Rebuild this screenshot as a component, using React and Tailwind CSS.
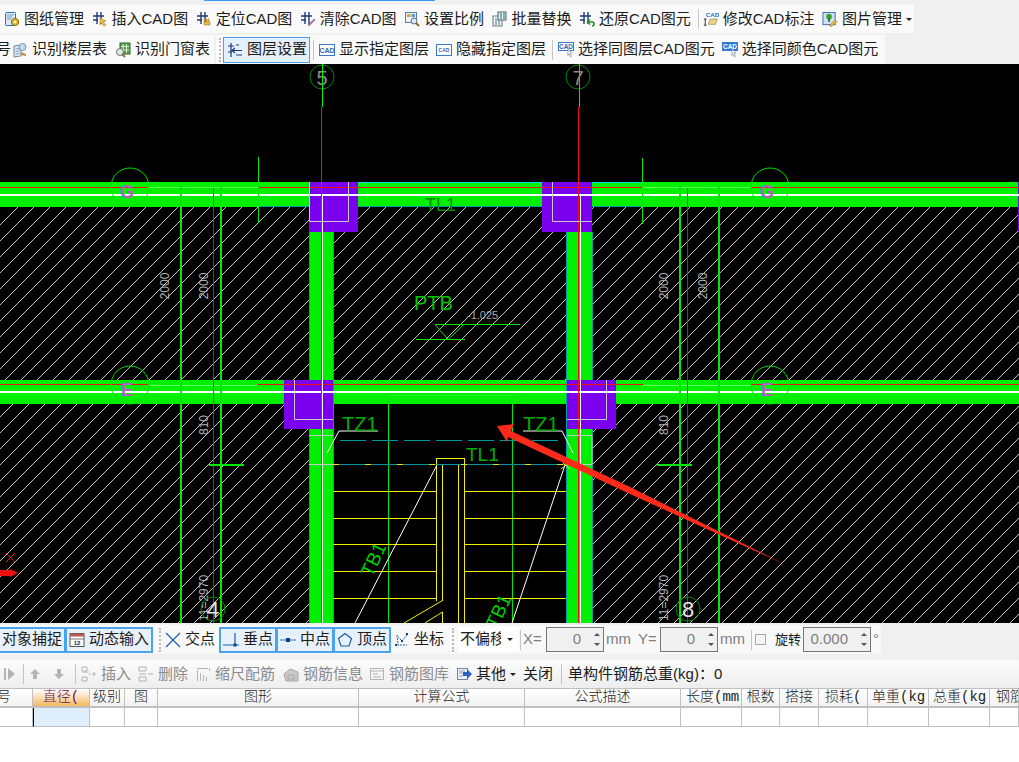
import React from 'react';

const NAVY = '#1d3a7a';

// 工具栏小图标
function Axis({ accent }) {
    return (
        <svg width="16" height="16" viewBox="0 0 16 16">
            <path d="M5 1v12M9 1v12M1 5h11M1 9h5" stroke={NAVY} strokeWidth="1.4" fill="none" />
            {accent === 'bolt' && <path d="M8 7l6 3-3 1 3 3-2 1-3-3-1 2z" fill="#e8c04a" stroke="#8a6a10" strokeWidth="0.5" />}
            {accent === 'hand' && <path d="M8 14V8h1v3h1V8h1v3h1V8h1v3h1v3z" fill="#e8b850" stroke="#9a7420" strokeWidth="0.5" />}
            {accent === 'eraser' && <path d="M8 14l6-6 1 1-6 6z" fill="#c878c8" stroke="#804080" strokeWidth="0.5" />}
            {accent === 'back' && <path d="M8 11h5a2 2 0 0 1 0 4M8 11l3-2.500M8 11l3 2.500" stroke="#2a8a30" strokeWidth="1.600" fill="none" />}
        </svg>
    );
}

function DocGear() {
    return (
        <svg width="16" height="16" viewBox="0 0 16 16">
            <rect x="1.500" y="1.500" width="10" height="13" rx="1" fill="#dcebf8" stroke="#2a70b0" />
            <path d="M3 4h7M3 6h5M3 8h4" stroke="#6a9cc8" />
            <circle cx="11" cy="11" r="3.600" fill="#e8b820" stroke="#8a6a10" />
            <circle cx="11" cy="11" r="1.200" fill="#fff" />
        </svg>
    );
}

function Scale() {
    return (
        <svg width="16" height="16" viewBox="0 0 16 16">
            <rect x="1.500" y="1.500" width="11" height="10" fill="#eef3fa" stroke="#5a7ea8" />
            <rect x="3" y="3" width="3.500" height="3" fill="#e0a040" />
            <rect x="7.500" y="3" width="3.500" height="3" fill="#5a9ad8" />
            <circle cx="10" cy="10" r="3" fill="#d8e8f4" stroke="#607080" />
            <path d="M12 12l3 3" stroke="#806030" strokeWidth="1.800" />
        </svg>
    );
}

function Batch() {
    return (
        <svg width="16" height="16" viewBox="0 0 16 16">
            <rect x="1" y="5" width="9" height="10" fill="#f4f6f6" stroke="#607880" />
            <path d="M4 7v7M7 7v7" stroke="#507888" />
            <rect x="6" y="1" width="8" height="8" fill="#e4eeee" stroke="#406870" />
            <path d="M9 2v6M12 2v6" stroke="#2a6a78" />
        </svg>
    );
}

function EditCad() {
    return (
        <svg width="18" height="18" viewBox="0 0 18 18">
            <text x="3" y="6.500" fontSize="7" fontWeight="700" fill="#2a70c8" fontFamily="Liberation Sans">CAD</text>
            <path d="M1 9h3M2.500 9v7M1 16h3" stroke="#222" fill="none" />
            <path d="M6 15l2-6h8l-2 6z" fill="#e8d48a" stroke="#9a7a30" strokeWidth="0.7" />
        </svg>
    );
}

function Picture() {
    return (
        <svg width="17" height="17" viewBox="0 0 17 17">
            <rect x="1" y="1" width="13" height="13" fill="#cfe0f6" stroke="#3a68b8" />
            <circle cx="7.500" cy="5.500" r="3" fill="#3aa030" />
            <rect x="6.500" y="7" width="2" height="4" fill="#2a7a28" />
            <path d="M8 15l6-6 2 2-6 5z" fill="#e8c040" stroke="#906a10" strokeWidth="0.6" />
        </svg>
    );
}

function FloorTable() {
    return (
        <svg width="16" height="16" viewBox="0 0 16 16">
            <path d="M2 4l7-1v11l-7 1z" fill="#dfe8f4" stroke="#7088a8" />
            <path d="M3.500 7l4-.5M3.500 9.500l4-.5M3.500 12l4-.5" stroke="#8aa0c0" />
            <circle cx="10.500" cy="5" r="3.500" fill="#c8dcf0" stroke="#7090b0" />
            <path d="M9 10l5 2v2l-5-1z" fill="#d08a30" />
        </svg>
    );
}

function DoorTable() {
    return (
        <svg width="16" height="16" viewBox="0 0 16 16">
            <rect x="5" y="1" width="10" height="11" fill="#5aa050" stroke="#2a6a28" />
            <path d="M8 2v9M11.500 2v9M6 4.500h8M6 8h8" stroke="#d8ecd0" />
            <circle cx="5" cy="10" r="3.500" fill="#dce8e0" stroke="#707870" />
            <path d="M7 12l3 3" stroke="#906a30" strokeWidth="1.800" />
        </svg>
    );
}

function LayerSet() {
    return (
        <svg width="16" height="16" viewBox="0 0 16 16">
            <path d="M4 1v14M1 4h6M1 10h4M8 6l-3 2.500 3 2.500M5 8.500h10M9 13h6M9 3h3" stroke={NAVY} strokeWidth="1.200" fill="none" />
        </svg>
    );
}

function CadBox({ small }) {
    return (
        <svg width="16" height="16" viewBox="0 0 16 16">
            <rect x="0.500" y="2.500" width="15" height="11" fill="#fff" stroke="#3a78c8" />
            <text x="8" y={small ? 10 : 11} textAnchor="middle" fontSize={small ? 5 : 7} fontWeight="700" fill="#2a68b8" fontFamily="Liberation Sans">CAD</text>
        </svg>
    );
}

function CadCursor({ solid }) {
    return (
        <svg width="16" height="16" viewBox="0 0 16 16">
            <rect x="0.500" y="0.500" width="15" height="8" fill={solid ? '#2a78d8' : '#fff'} stroke="#3a78c8" />
            <text x="8" y="7" textAnchor="middle" fontSize="6.500" fontWeight="700" fill={solid ? '#fff' : '#2a68b8'} fontFamily="Liberation Sans">CAD</text>
            <path d="M10 7l4 4-2 .3 1.500 3-1.200.7-1.500-3-1 1.500z" fill="#e8eef4" stroke="#7a8aa0" strokeWidth="0.6" />
        </svg>
    );
}

function Calc() {
    return (
        <svg width="16" height="16" viewBox="0 0 16 16">
            <rect x="1" y="1.500" width="14" height="13" fill="#fff" stroke="#555" />
            <rect x="1" y="1.500" width="14" height="3" fill="#b85a50" />
            <path d="M1 7h14" stroke="#777" />
            <text x="8" y="13" textAnchor="middle" fontSize="6" fontWeight="700" fill="#222" fontFamily="Liberation Sans">12</text>
        </svg>
    );
}

function Snap({ type }) {
    const blue = '#1c5fa8';
    return (
        <svg width="16" height="16" viewBox="0 0 16 16">
            {type === 'cross' && <path d="M1 1l14 14M15 1L1 15" stroke={blue} strokeWidth="1.200" />}
            {type === 'perp' && <>
                <path d="M0 13h16M12 1v12" stroke={blue} strokeWidth="1.200" />
                <rect x="10.500" y="11.500" width="3" height="3" fill="#123f80" />
            </>}
            {type === 'mid' && <>
                <path d="M0 8h16" stroke="#4a8ad0" strokeWidth="1.200" />
                <rect x="6" y="6" width="4" height="4" fill="#123f80" />
            </>}
            {type === 'vertex' && <path d="M8 1.500l6.500 5-2.500 7.500H4L1.500 6.500z" fill="none" stroke={blue} strokeWidth="1.200" />}
            {type === 'coord' && <>
                <path d="M3 3l1 10h9M13 3L8 9 4 5" stroke={blue} fill="none" strokeDasharray="2 1" />
                <rect x="1" y="12" width="2" height="2" fill="#123f80" />
                <rect x="12" y="1" width="2" height="2" fill="#123f80" />
                <rect x="7" y="8" width="2" height="2" fill="#123f80" />
            </>}
        </svg>
    );
}

function Gray({ type }) {
    const c = '#b4b4b4';
    return (
        <svg width="16" height="16" viewBox="0 0 16 16">
            {type === 'last' && <path d="M2 2v12h2V2zM6 2v12l7-6z" fill={c} />}
            {type === 'up' && <path d="M8 3l5 5H10v5H6V8H3z" fill={c} />}
            {type === 'down' && <path d="M8 13l5-5H10V3H6v5H3z" fill={c} />}
            {type === 'ins' && <path d="M1 1h5v4H1zM1 11h5v4H1zM1 6h7M11 8h4M13 6v4M8 8h2" stroke={c} fill="none" />}
            {type === 'del' && <path d="M1 1h7v4H1zM1 11h7v4H1zM1 8h7M10 8h5" stroke={c} fill="none" />}
            {type === 'scale' && <path d="M2 15V4h1v11zM5 15V7h1v8zM8 15V9h1v6zM11 15v-4h1v4zM2 2h11v1H2zM14 2h1v3h-1z" fill={c} />}
            {type === 'info' && <path d="M1 8l6-5 8 3v9H3z M5 9h6v4H5z" fill="#c8c8c8" stroke="#a8a8a8" />}
            {type === 'lib' && <path d="M1.500 2.500h13v11h-13zM1.500 5h13M4 8h5M4 11h8" stroke={c} fill="none" />}
        </svg>
    );
}

function Other() {
    return (
        <svg width="16" height="16" viewBox="0 0 16 16">
            <rect x="1.500" y="2.500" width="10" height="11" fill="#eef2f8" stroke="#7088a8" />
            <path d="M3 5h6M3 7h4M3 10h4" stroke="#90a0b8" />
            <path d="M7 6h4V3l5 5-5 5v-3H7z" fill="#2a62c8" />
        </svg>
    );
}

function Tool({ icon, label, className = '' }) {
    return (
        <div className={`flex items-center gap-[4px] shrink-0 ${className}`}>
            <span className="w-[16px] h-[16px] flex items-center justify-center shrink-0">{icon}</span>
            <span className="whitespace-nowrap">{label}</span>
        </div>
    );
}

function Caret() {
    return <span className="block w-0 h-0 border-x-[3px] border-x-transparent border-t-[3px] border-t-[#222] shrink-0" />;
}

function Grip() {
    return <span className="block w-[2px] h-[24px] shrink-0 border-l-2 border-dotted border-[#b8b8b8]" />;
}

function Sep() {
    return <span className="block w-px h-[20px] bg-[#c4c4c4] shrink-0" />;
}

function Spin({ value, className }) {
    return (
        <div className={`h-[25px] border border-[#767676] bg-[#f0f0f0] flex items-center justify-end shrink-0 ${className}`}>
            <span className="text-[#7f7f7f]">{value}</span>
            <div className="w-[18px] pl-[5px] flex flex-col gap-[7px] items-center ml-[4px]">
                <span className="block w-0 h-0 border-x-[3px] border-x-transparent border-b-[3px] border-b-[#555]" />
                <span className="block w-0 h-0 border-x-[3px] border-x-transparent border-t-[3px] border-t-[#555]" />
            </div>
        </div>
    );
}

function SnapBtn({ icon, label, className = '' }) {
    return (
        <div className={`h-[26px] flex items-center justify-center gap-[4px] border-2 border-[#4aa3ee] bg-[#e6f1fb] shrink-0 ${className}`}>
            {icon}
            <span>{label}</span>
        </div>
    );
}

// 底图：CAD 绘图区，坐标直接用截图坐标
function CadCanvas() {
    const hatch = [];
    for (let c = 224; c < 1700; c += 16) {
        hatch.push(<line key={c} x1={c - 623 + 0.5} y1={623.5} x2={c - 207 + 0.5} y2={207.5} />);
    }
    const green = '#00f000';
    const treads = [491, 518, 544, 571, 598];
    const dimText = { fill: '#b4b4b4', fontSize: 12, fontFamily: 'Liberation Sans' };
    const vertText = (x, y, t) => (
        <text key={`${x}-${y}`} {...dimText} textAnchor="middle" transform={`translate(${x} ${y}) rotate(-90)`}>{t}</text>
    );
    const axis = (x, y, label, fill, size) => (
        <g key={label + x}>
            <circle cx={x} cy={y} r="12" fill="none" stroke="#008a00" />
            <text x={x} y={y + 8} textAnchor="middle" fontSize={size} fill={fill} fontFamily="Liberation Sans">{label}</text>
        </g>
    );
    const row = (x, y, label) => (
        <g key={label + x + y}>
            <circle cx={x} cy={y} r="19" fill="none" stroke="#00e000" />
            <text x={x - 3} y={y + 11} textAnchor="middle" fontSize="18" fontWeight="700" fill="#b060c8" fontFamily="Liberation Sans">{label}</text>
        </g>
    );

    return (
        <svg width="1019" height="559" viewBox="0 64 1019 559" className="block bg-black">
            <g stroke="#c4c4c4" strokeWidth="1" shapeRendering="crispEdges">{hatch}</g>

            {/* 楼梯间 */}
            <rect x="333" y="404" width="233" height="219" fill="#000" />

            {/* 梁 */}
            <rect x="0" y="182" width="1019" height="25" fill={green} />
            <rect x="0" y="380" width="1019" height="24" fill={green} />
            <rect x="309" y="232" width="24" height="391" fill={green} />
            <rect x="567" y="232" width="25" height="391" fill={green} />
            <rect x="309" y="182" width="334" height="1" fill="#00d8e8" />
            <rect x="260" y="206" width="383" height="1" fill="#00a0a0" />

            <g fill="#00a0a0" shapeRendering="crispEdges">
                <rect x="309" y="232" width="1" height="391" />
                <rect x="333" y="232" width="1" height="391" />
                <rect x="566" y="232" width="1" height="391" />
                <rect x="592" y="232" width="1" height="391" />
            </g>

            {/* 柱 */}
            <g fill="#7b00ee">
                <rect x="309" y="182" width="49" height="50" />
                <rect x="542" y="182" width="50" height="50" />
                <rect x="284" y="380" width="49" height="49" />
                <rect x="567" y="380" width="49" height="49" />
                <rect x="1018" y="182" width="1" height="50" />
            </g>

            {/* 白线、红线 */}
            <g shapeRendering="crispEdges">
                <rect x="0" y="194" width="1019" height="2" fill="#fff" />
                <rect x="0" y="391" width="1019" height="2" fill="#fff" />
                <rect x="0" y="187" width="148" height="1" fill="#f01010" />
                <rect x="258" y="187" width="385" height="1" fill="#f01010" />
                <rect x="751" y="187" width="268" height="1" fill="#f01010" />
                <rect x="0" y="384" width="148" height="1" fill="#f01010" />
                <rect x="258" y="384" width="385" height="1" fill="#f01010" />
                <rect x="751" y="384" width="268" height="1" fill="#f01010" />
                <rect x="148" y="187" width="110" height="1" fill="#60f860" />
                <rect x="643" y="187" width="108" height="1" fill="#60f860" />
                <rect x="148" y="385" width="110" height="1" fill="#60f860" />
                <rect x="643" y="385" width="108" height="1" fill="#60f860" />
                <rect x="322" y="196" width="1" height="427" fill="#fff" />
                <rect x="580" y="196" width="1" height="427" fill="#fff" />
                <rect x="321" y="107" width="1" height="516" fill="#f01010" />
                <rect x="578" y="107" width="1" height="516" fill="#f01010" />
            </g>

            <g fill="none" stroke="#c8c8c8">
                <path d="M309.500 182v39.500h39v-39.500" />
                <path d="M552.500 182v39.500h39.500" />
                <path d="M294.500 380v39.500h38.500" />
                <path d="M567 419.500h39.500v-39.500" />
                <path d="M309 435.500h24M309 464.500h24M567 435.500h25v29h-25" />
            </g>

            {/* 轴线 */}
            <g shapeRendering="crispEdges">
                <rect x="180" y="187" width="2" height="436" fill="#00e800" />
                <rect x="220" y="187" width="2" height="436" fill="#00e800" />
                <rect x="679" y="187" width="2" height="436" fill="#00e800" />
                <rect x="718" y="187" width="2" height="436" fill="#00e800" />
                <rect x="213" y="188" width="1" height="435" fill="#e01010" />
                <rect x="687" y="188" width="1" height="435" fill="#e01010" />
                <rect x="258" y="157" width="1" height="66" fill="#00e800" />
                <rect x="642" y="158" width="1" height="66" fill="#00e800" />
                <rect x="209" y="464" width="35" height="2" fill="#00e800" />
                <rect x="657" y="464" width="35" height="2" fill="#00e800" />
                <rect x="388" y="395" width="1" height="228" fill="#00e800" />
                <rect x="512" y="395" width="1" height="228" fill="#00e800" />
                <rect x="388" y="395" width="125" height="1" fill="#20f020" />
            </g>

            {/* 梯段 */}
            <g stroke="#f0f000" fill="none" shapeRendering="crispEdges">
                {treads.map((y) => (
                    <path key={y} d={`M333 ${y}.5H436M464 ${y}.5H566`} />
                ))}
                <path d="M436.500 601V458.500H464.500V623" />
                <path d="M442.500 464V600.500M458.500 464V623" />
            </g>
            <path d="M442.500 600.500L404 623M442.500 612V623M442.500 612L425 623" stroke="#f0f000" fill="none" />
            <path d="M340 440.500H560" stroke="#0098a0" strokeDasharray="26 6" />
            <path d="M333 464.500H566" stroke="#0098a0" />
            <path d="M333 464.500H566" stroke="#f0e000" strokeDasharray="6 26" />
            <path d="M561 469l8-6M563 463l7 6" stroke="#f0f000" />
            <g stroke="#fff" fill="none">
                <path d="M437 465L355 623M565 465L512 623" />
                <path d="M378 431H339L327 453M523 431H562L573 453" />
            </g>

            {/* 文字标注 */}
            <g fontFamily="Liberation Sans" fill="#00b000">
                <text x="425" y="211" fontSize="18" fill="#008a00">TL1</text>
                <text x="466" y="461" fontSize="19">TL1</text>
                <text x="342" y="431" fontSize="20">TZ1</text>
                <text x="523" y="431" fontSize="20">TZ1</text>
                <text x="414" y="310" fontSize="20" fill="#00c800">PTB</text>
                <text fontSize="19" fill="#00d000" transform="translate(372 578) rotate(-65)">TB1</text>
                <text fontSize="19" fill="#00d000" transform="translate(497 630) rotate(-65)">TB1</text>
            </g>
            <text x="467" y="319" fontSize="11" fill="#a8a8a8" fontFamily="Liberation Sans">-1.025</text>
            <path d="M435 324.500H520M416 339.500H465M435 324.500L448 339.500L464 324.500" stroke="#00e800" fill="none" />

            {vertText(169, 286, '2000')}
            {vertText(208, 286, '2000')}
            {vertText(668, 286, '2000')}
            {vertText(707, 286, '2000')}
            {vertText(208, 425, '810')}
            {vertText(668, 425, '810')}
            {vertText(208, 598, '11=2970')}
            {vertText(668, 598, '11=2970')}

            {axis(322, 77, '5', '#8c8c8c', 20)}
            {axis(578, 77, '7', '#8c8c8c', 20)}
            {axis(213, 609, '4', '#e4e4e4', 22)}
            {axis(688, 609, '8', '#e4e4e4', 22)}
            <g shapeRendering="crispEdges">
                <rect x="322" y="64" width="1" height="43" fill={green} />
                <rect x="579" y="64" width="1" height="43" fill={green} />
            </g>
            {row(130, 187, 'G')}
            {row(130, 385, 'E')}
            {row(770, 187, 'G')}
            {row(770, 385, 'E')}

            {/* 左下坐标标记 */}
            <path d="M6 553l9 9M15 553l-9 9" stroke="#f01010" />
            <path d="M0 570h10v-1l8 4-8 4v-1H0z" fill="#f01010" />

            {/* 截图上画的红箭头 */}
            <path d="M497 426L514 424L511 431L630 487L786 565L630 494L508 437L507 442z" fill="#ff2a1a" />
        </svg>
    );
}

const columns = [
    { label: '号', cls: 'justify-end pr-[21px]' },
    { label: '直径(', cls: 'bg-gradient-to-b from-[#fbdc9c] to-[#f3b85c] text-[#6a1060]', active: true },
    { label: '级别' },
    { label: '图' },
    { label: '图形' },
    { label: '计算公式' },
    { label: '公式描述' },
    { label: '长度(mm', cls: 'justify-start pl-[5px]' },
    { label: '根数' },
    { label: '搭接' },
    { label: '损耗(', cls: 'justify-start pl-[6px]' },
    { label: '单重(kg', cls: 'justify-start pl-[4px]' },
    { label: '总重(kg', cls: 'justify-start pl-[4px]' },
    { label: '钢筋', cls: 'justify-start pl-[6px]' },
];

export default function App() {
    return (
        <div className="w-[1019px] h-[762px] overflow-hidden flex flex-col bg-white text-[15px] text-[#1c1c1c] font-['Liberation_Sans','Noto_Sans_CJK_SC',sans-serif]">
            {/* 顶部工具栏 */}
            <div className="h-[64px] bg-[#f0f0f0] flex flex-col shrink-0">
                <div className="h-[5px] relative">
                    <div className="absolute left-[204px] w-[231px] top-0 h-px bg-[#3a9aee]" />
                </div>
                <div className="h-[28px] w-[914px] bg-[#fafafa] flex items-center gap-[7.5px] pl-[4px]">
                    <Tool icon={<DocGear />} label="图纸管理" />
                    <Tool icon={<Axis accent="bolt" />} label="插入CAD图" />
                    <Tool icon={<Axis accent="hand" />} label="定位CAD图" />
                    <Tool icon={<Axis accent="eraser" />} label="清除CAD图" />
                    <Tool icon={<Scale />} label="设置比例" />
                    <Tool icon={<Batch />} label="批量替换" />
                    <Tool icon={<Axis accent="back" />} label="还原CAD图元" />
                    <Sep />
                    <Tool icon={<EditCad />} label="修改CAD标注" className="-ml-[4px]" />
                    <Tool icon={<Picture />} label="图片管理" />
                    <div className="-ml-[3.5px]"><Caret /></div>
                </div>
                <div className="h-[2px]" />
                <div className="h-[29px] w-[885px] flex items-center">
                    <div className="h-full w-[214px] bg-[#fafafa] flex items-center overflow-hidden">
                        <span className="-ml-[4px] w-[16px] shrink-0">号</span>
                        <Tool icon={<FloorTable />} label="识别楼层表" />
                        <Tool icon={<DoorTable />} label="识别门窗表" className="ml-[8px]" />
                    </div>
                    <div className="h-full ml-[2px] flex-1 bg-[#fafafa] flex items-center">
                        <div className="ml-[3px]"><Grip /></div>
                        <div className="ml-[2px] h-[26px] w-[87px] flex items-center pl-[3px] border border-[#4a9ee8] bg-[#e4f0fb]">
                            <Tool icon={<LayerSet />} label="图层设置" />
                        </div>
                        <div className="ml-[3px]"><Sep /></div>
                        <Tool icon={<CadBox />} label="显示指定图层" className="ml-[5px]" />
                        <Tool icon={<CadBox small />} label="隐藏指定图层" className="ml-[7px]" />
                        <div className="ml-[6px]"><Sep /></div>
                        <Tool icon={<CadCursor />} label="选择同图层CAD图元" className="ml-[5px]" />
                        <Tool icon={<CadCursor solid />} label="选择同颜色CAD图元" className="ml-[7px]" />
                    </div>
                </div>
            </div>

            {/* 绘图区 */}
            <div className="h-[559px] shrink-0 overflow-hidden">
                <CadCanvas />
            </div>

            {/* 捕捉工具栏 */}
            <div className="h-[37px] bg-[#f0f0f0] shrink-0 flex items-start">
                <div className="mt-[2px] h-[29px] w-[881px] flex items-center bg-[#f8f8f8]">
                    <SnapBtn icon={null} label="对象捕捉" className="w-[66px] border-l-0" />
                    <SnapBtn icon={<Calc />} label="动态输入" className="w-[88px] -ml-px" />
                    <div className="ml-[6px]"><Grip /></div>
                    <Tool icon={<Snap type="cross" />} label="交点" className="ml-[4px]" />
                    <SnapBtn icon={<Snap type="perp" />} label="垂点" className="w-[58px] ml-[4px]" />
                    <SnapBtn icon={<Snap type="mid" />} label="中点" className="w-[58px] -ml-px" />
                    <SnapBtn icon={<Snap type="vertex" />} label="顶点" className="w-[58px] -ml-px" />
                    <Tool icon={<Snap type="coord" />} label="坐标" className="ml-[3px]" />
                    <div className="ml-[8px]"><Grip /></div>
                    <div className="ml-[4px] w-[61px] h-[25px] bg-white flex items-center pl-[2px] overflow-hidden">
                        <span className="w-[41px] overflow-hidden whitespace-nowrap shrink-0">不偏移</span>
                        <div className="ml-[6px]"><Caret /></div>
                    </div>
                    <div className="ml-[1px]"><Sep /></div>
                    <span className="ml-[2px] w-[23px] text-[#7f7f7f] shrink-0">X=</span>
                    <Spin value="0" className="w-[58px]" />
                    <span className="ml-[2px] w-[32px] text-[#7f7f7f] shrink-0">mm</span>
                    <span className="w-[22px] text-[#7f7f7f] shrink-0">Y=</span>
                    <Spin value="0" className="w-[58px]" />
                    <span className="ml-[2px] w-[31px] text-[#7f7f7f] shrink-0">mm</span>
                    <Sep />
                    <span className="block ml-[3px] w-[11px] h-[11px] border border-[#a8a8a8] bg-[#f4f4f4] shrink-0" />
                    <span className="ml-[9px] text-[13px] w-[28px] shrink-0 whitespace-nowrap">旋转</span>
                    <Spin value="0.000" className="w-[68px]" />
                    <span className="ml-[2px] text-[#7f7f7f]">°</span>
                </div>
            </div>

            {/* 钢筋工具栏 */}
            <div className="h-[28px] shrink-0 flex items-center pl-[2px] text-[#8c8c8c] bg-gradient-to-b from-[#fcfcfc] to-[#eeeeee]">
                <Gray type="last" />
                <div className="ml-[5px]"><Sep /></div>
                <div className="ml-[3px]"><Gray type="up" /></div>
                <div className="ml-[8px]"><Gray type="down" /></div>
                <div className="ml-[8px]"><Sep /></div>
                <Tool icon={<Gray type="ins" />} label="插入" className="ml-[5px]" />
                <Tool icon={<Gray type="del" />} label="删除" className="ml-[7px]" />
                <Tool icon={<Gray type="scale" />} label="缩尺配筋" className="ml-[7px]" />
                <Tool icon={<Gray type="info" />} label="钢筋信息" className="ml-[8px]" />
                <Tool icon={<Gray type="lib" />} label="钢筋图库" className="ml-[6px]" />
                <Tool icon={<Other />} label={<span className="text-[#1c1c1c]">其他</span>} className="ml-[7px]" />
                <div className="ml-[4px]"><Caret /></div>
                <span className="ml-[7px] text-[#1c1c1c] shrink-0">关闭</span>
                <div className="ml-[8px]"><Sep /></div>
                <span className="ml-[6px] text-[#1c1c1c] whitespace-nowrap">单构件钢筋总重(kg)：0</span>
            </div>

            {/* 钢筋表格 */}
            <div className="shrink-0 grid grid-cols-[33px_57px_35px_33px_201px_166px_156px_61px_38px_39px_49px_61px_61px_29px] text-[14px] font-['Liberation_Mono','Noto_Sans_CJK_SC',monospace] font-light">
                {columns.map((col) => (
                    <div
                        key={col.label}
                        className={`h-[20px] flex items-center justify-center overflow-hidden whitespace-nowrap border-t border-b-2 border-r border-[#c0c0c0] bg-gradient-to-b from-white to-[#f2f2f2] ${col.cls || ''}`}
                    >
                        {col.label}
                    </div>
                ))}
                {columns.map((col) => (
                    <div
                        key={`${col.label}-cell`}
                        className={`h-[19px] border-b border-r border-[#c0c0c0] ${col.active ? 'bg-[#dfeefd] border-l border-l-black' : 'bg-white'}`}
                    />
                ))}
            </div>
        </div>
    );
}
